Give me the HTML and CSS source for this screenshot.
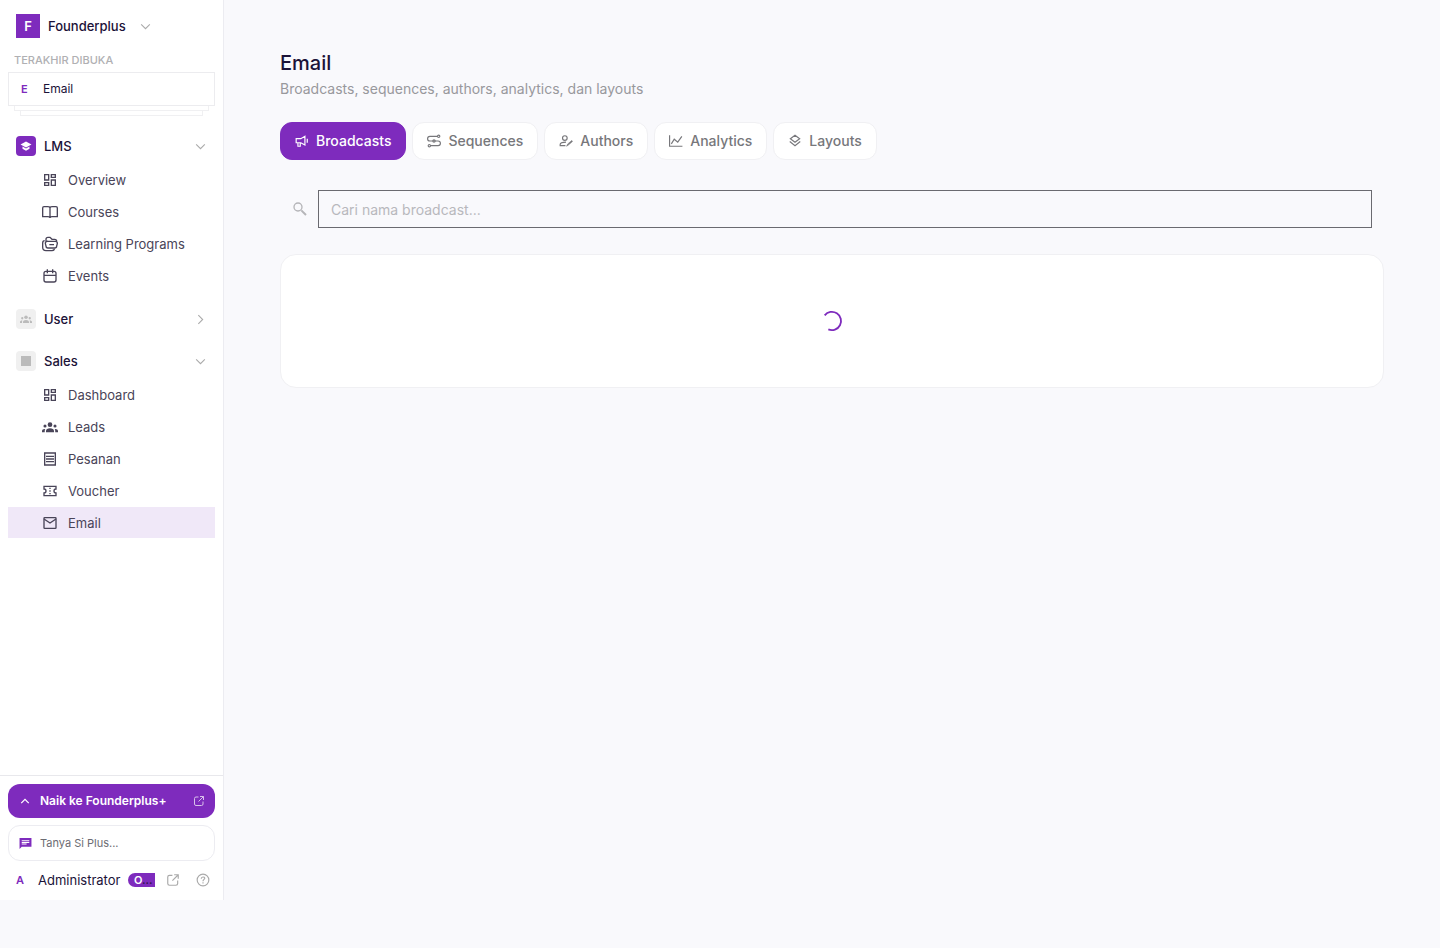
FILE: index.html
```html
<!DOCTYPE html>
<html lang="id">
<head>
<meta charset="utf-8">
<meta name="viewport" content="width=device-width, initial-scale=1">
<title>Email - Founderplus</title>
<link rel="stylesheet" href="styles.css">
</head>
<body>
<svg class="sprite" aria-hidden="true">
	<symbol id="down" viewBox="0 0 24 24"><path d="M4 8l8 8 8-8" fill="none" stroke="currentColor" stroke-width="2"/></symbol>
	<symbol id="grid" viewBox="0 0 24 24"><path d="M4 4h6v8H4zM14 4h6v4h-6zM4 16h6v4H4zM14 12h6v8h-6z" fill="none" stroke="currentColor" stroke-width="2"/></symbol>
	<symbol id="people" viewBox="0 0 24 24"><circle cx="12" cy="8.500" r="3.500"/><circle cx="4.500" cy="10.500" r="2.300"/><circle cx="19.500" cy="10.500" r="2.300"/><path d="M6 20v-2c0-2.500 2.500-4 6-4s6 1.500 6 4v2zM0 20v-2c0-2.300 2-3.300 5-3-.7.8-.9 1.500-.9 5zM24 20v-2c0-2.300-2-3.300-5-3 .7.8.9 1.500.9 5z"/></symbol>
	<symbol id="external" viewBox="0 0 24 24"><path d="M11 4H6a3 3 0 0 0-3 3v11a3 3 0 0 0 3 3h11a3 3 0 0 0 3-3v-5M14 3h7v7M21 3l-10 10" fill="none" stroke="currentColor" stroke-width="2"/></symbol>
</svg>
<div class="app">
	<aside class="sidebar">
		<button class="brand" type="button">
			<span class="logo">F</span>
			<span>Founderplus</span>
			<svg class="chevron"><use href="#down"/></svg>
		</button>
		<h2 class="recent-title">TERAKHIR DIBUKA</h2>
		<div class="recent">
			<a class="recent-card" href="#email"><span class="letter">E</span>Email</a>
			<div class="stack"></div>
			<div class="stack stack-last"></div>
		</div>
		<nav class="nav">
			<section>
				<button class="group" type="button">
					<span class="group-icon active"><svg viewBox="0 0 24 24"><path d="M12 3L1 9l11 6 11-6zM5 13v4.500l7 4 7-4V13l-7 4z"/></svg></span>
					LMS
					<svg class="chevron"><use href="#down"/></svg>
				</button>
				<ul class="list">
					<li><a class="item" href="#overview"><svg><use href="#grid"/></svg>Overview</a></li>
					<li><a class="item" href="#courses"><svg viewBox="0 0 24 24"><path d="M12 6v14M12 6c0-1-1-2-3-2H3a2 2 0 0 0-2 2v13h8c2 0 3 1 3 2 0-1 1-2 3-2h8V6a2 2 0 0 0-2-2h-6c-2 0-3 1-3 2z" fill="none" stroke="currentColor" stroke-width="2"/></svg>Courses</a></li>
					<li><a class="item" href="#programs"><svg viewBox="0 0 24 24"><path d="M6 8V5a3 3 0 0 1 3-3h3l3 3h4a3 3 0 0 1 3 3M9 8h11a3 3 0 0 1 3 3l-1 4a3 3 0 0 1-3 3H9a3 3 0 0 1-3-3L5 11a3 3 0 0 1 4-3zM11 13h7M4 7c-2 0-3 1-3 4v6c0 3 2 5 5 5h9c2 0 3-1 4-2" fill="none" stroke="currentColor" stroke-width="2"/></svg>Learning Programs</a></li>
					<li><a class="item" href="#events"><svg viewBox="0 0 24 24"><rect x="3" y="5" width="18" height="16" rx="3" fill="none" stroke="currentColor" stroke-width="2"/><path d="M3 11h18M8 2v6M16 2v6" fill="none" stroke="currentColor" stroke-width="2"/></svg>Events</a></li>
				</ul>
			</section>
			<section>
				<button class="group" type="button">
					<span class="group-icon"><svg><use href="#people"/></svg></span>
					User
					<svg class="chevron closed"><use href="#down"/></svg>
				</button>
			</section>
			<section>
				<button class="group" type="button">
					<span class="group-icon"><svg viewBox="0 0 24 24"><path d="M2 2h20v20H2z"/></svg></span>
					Sales
					<svg class="chevron"><use href="#down"/></svg>
				</button>
				<ul class="list">
					<li><a class="item" href="#dashboard"><svg><use href="#grid"/></svg>Dashboard</a></li>
					<li><a class="item" href="#leads"><svg><use href="#people"/></svg>Leads</a></li>
					<li><a class="item" href="#pesanan"><svg viewBox="0 0 24 24"><path d="M4 3h16v18H4zM6 8h12M6 12h12M6 16h12" fill="none" stroke="currentColor" stroke-width="2"/></svg>Pesanan</a></li>
					<li><a class="item" href="#voucher"><svg viewBox="0 0 24 24"><path d="M3 5h18v4a3 3 0 0 0 0 6v4H3v-4a3 3 0 0 0 0-6z" fill="none" stroke="currentColor" stroke-width="2"/><path d="M12 7v2M12 11v2M12 15v2" stroke="currentColor" stroke-width="2"/></svg>Voucher</a></li>
					<li><a class="item current" href="#email"><svg viewBox="0 0 24 24"><rect x="3" y="4" width="18" height="16" rx="1" fill="none" stroke="currentColor" stroke-width="2"/><path d="M3 6l9 6 9-6" fill="none" stroke="currentColor" stroke-width="2"/></svg>Email</a></li>
				</ul>
			</section>
		</nav>
		<div class="footer">
			<a class="upgrade" href="#upgrade">
				<svg viewBox="0 0 24 24"><path d="M3 17l9-9 9 9" fill="none" stroke="currentColor" stroke-width="3"/></svg>
				Naik ke Founderplus+
				<svg class="ext"><use href="#external"/></svg>
			</a>
			<button class="ask" type="button">
				<svg viewBox="0 0 24 24"><path d="M1 2h22v16H5l-4 4z"/><path d="M5 7h14M5 10h14M5 13h9" stroke="#fff" stroke-width="2"/></svg>
				Tanya Si Plus...
			</button>
			<div class="account">
				<span class="letter">A</span>
				<span class="name">Administrator</span>
				<span class="role">O<i>...</i></span>
				<a href="#site" aria-label="Buka situs"><svg><use href="#external"/></svg></a>
				<a href="#help" aria-label="Bantuan"><svg viewBox="0 0 24 24"><g fill="none" stroke="currentColor" stroke-width="2"><circle cx="12" cy="12" r="10"/><path d="M9 10c0-4 6-4 6-1 0 2-3 2-3 5M12 16v2"/></g></svg></a>
			</div>
		</div>
	</aside>
	<main class="main">
		<h1>Email</h1>
		<p class="subtitle">Broadcasts, sequences, authors, analytics, dan layouts</p>
		<div class="tabs">
			<button class="tab selected" type="button"><svg viewBox="0 0 24 24"><path d="M2 8h8l7-4v15l-7-4H2zM5 15v6h4v-6M21 8v7" fill="none" stroke="currentColor" stroke-width="2"/></svg>Broadcasts</button>
			<button class="tab" type="button"><svg viewBox="0 0 24 24"><g fill="none" stroke="currentColor" stroke-width="2"><path d="M18 4H5a4 4 0 0 0 0 8h14a4 4 0 0 1 0 8H6"/><circle cx="20" cy="4" r="2"/><circle cx="4" cy="20" r="2"/><circle cx="12" cy="12" r="2"/></g></svg>Sequences</button>
			<button class="tab" type="button"><svg viewBox="0 0 24 24"><g fill="none" stroke="currentColor" stroke-width="2"><circle cx="10" cy="7" r="4"/><path d="M11 20H2v-2c0-3 4-4 10-4"/><path d="M13 21l2-4 7-6 1 2-7 6z" fill="currentColor" stroke-width="1"/></g></svg>Authors</button>
			<button class="tab" type="button"><svg viewBox="0 0 24 24"><path d="M1 2v19h22M4 17l5-8 6 5 7-10" fill="none" stroke="currentColor" stroke-width="2"/></svg>Analytics</button>
			<button class="tab" type="button"><svg viewBox="0 0 24 24"><path d="M12 2l8 6-8 6-8-6zM3 13l9 7 9-7" fill="none" stroke="currentColor" stroke-width="2"/></svg>Layouts</button>
		</div>
		<div class="search">
			<label for="search" aria-label="Cari"><svg viewBox="0 0 24 24"><circle cx="9" cy="9" r="6" fill="none" stroke="currentColor" stroke-width="2"/><path d="M14 14l7 7" stroke="currentColor" stroke-width="3"/></svg></label>
			<input id="search" type="text" placeholder="Cari nama broadcast...">
		</div>
		<div class="panel">
			<svg class="spinner" viewBox="0 0 24 24"><path d="M4 5.800A10 10 0 1 1 8 21.200" fill="none" stroke="currentColor" stroke-width="2"/></svg>
		</div>
	</main>
</div>
</body>
</html>
```
FILE: styles.css
```css
* {
	box-sizing: border-box;
}
body {
	margin: 0;
	background: #f9f9fc;
	color: #1b1238;
	font: 13px/20px Inter, "Open Sans", sans-serif;
}
a {
	color: inherit;
	text-decoration: none;
}
button {
	border: 0;
	background: none;
	color: inherit;
	font: inherit;
	text-align: left;
	cursor: pointer;
}
svg {
	flex: none;
	width: 16px;
	height: 16px;
	fill: currentColor;
}
.sprite {
	display: none;
}
.app {
	display: flex;
	min-height: 100vh;
}

/* sidebar */
.sidebar {
	display: flex;
	flex: none;
	flex-direction: column;
	width: 224px;
	min-height: calc(100vh - 48px);
	align-self: flex-start;
	border-right: 1px solid #ececf1;
	background: #fff;
}
.brand {
	display: flex;
	align-items: center;
	gap: 8px;
	padding: 14px 16px 0;
	font-weight: 500;
}
.brand .chevron {
	margin-left: 5px;
}
.logo {
	width: 24px;
	background: #7e2bbd;
	color: #fff;
	font-weight: 600;
	line-height: 24px;
	text-align: center;
}
.chevron {
	width: 13px;
	height: 13px;
	color: #aaa;
}
.recent-title {
	margin: 14px 14px 4px;
	color: #b0b0b3;
	font-size: 11px;
	font-weight: 500;
	line-height: 16px;
}
.recent {
	padding: 0 8px;
}
.recent-card {
	display: flex;
	align-items: center;
	height: 34px;
	padding-left: 12px;
	border: 1px solid #ececef;
	font-size: 12px;
}
.letter {
	width: 22px;
	color: #7e2bbd;
	font-size: 11px;
	font-weight: 600;
}
.stack {
	height: 5px;
	margin: 0 6px;
	border: 1px solid #f0f0f2;
	border-top: 0;
}
.stack-last {
	margin: 0 12px;
}
.nav {
	display: flex;
	flex: 1;
	flex-direction: column;
	gap: 10px;
	padding: 14px 8px;
}
.group {
	display: flex;
	align-items: center;
	gap: 8px;
	width: 100%;
	height: 32px;
	padding: 0 8px;
	font-weight: 500;
}
.group .chevron {
	margin-left: auto;
}
.closed {
	transform: rotate(-90deg);
}
.group-icon {
	display: flex;
	align-items: center;
	justify-content: center;
	width: 20px;
	height: 20px;
	border-radius: 4px;
	background: #f0f0f0;
	color: #bbb;
}
.group-icon svg {
	width: 12px;
	height: 12px;
}
.group-icon.active {
	background: #7e2bbd;
	color: #fff;
}
.list {
	display: flex;
	flex-direction: column;
	gap: 1px;
	margin: 0;
	padding: 2px 0;
	list-style: none;
}
.item {
	display: flex;
	align-items: center;
	gap: 10px;
	height: 31px;
	padding-left: 34px;
	color: #494458;
}
.item.current {
	background: #f0e8f8;
}
.footer {
	padding: 8px 8px 9px;
	border-top: 1px solid #e8e8ec;
}
.upgrade,
.ask {
	display: flex;
	align-items: center;
	gap: 8px;
	width: 100%;
	padding: 0 10px;
	border-radius: 12px;
	font-size: 12px;
}
.upgrade {
	height: 34px;
	background: #7e2bbd;
	color: #fff;
	font-weight: 600;
}
.upgrade svg {
	width: 14px;
	height: 10px;
}
.upgrade .ext {
	width: 12px;
	height: 12px;
	margin-left: auto;
	opacity: .7;
}
.ask {
	height: 36px;
	margin: 7px 0 8px;
	border: 1px solid #ececf1;
	color: #6c6c72;
	font-size: 11px;
}
.ask svg {
	width: 13px;
	height: 13px;
	color: #7e2bbd;
}
.account {
	display: flex;
	align-items: center;
	height: 22px;
	padding: 0 5px 0 8px;
}
.name {
	flex: 1;
}
.role {
	width: 27px;
	height: 14px;
	margin-right: 11px;
	padding-left: 6px;
	border-radius: 7px 0 0 7px;
	background: #7e2bbd;
	color: #fff;
	font-size: 11px;
	font-weight: 600;
	line-height: 14px;
}
.role i {
	color: #35154f;
	font-style: normal;
}
.account a {
	display: flex;
	color: #aaa;
}
.account a + a {
	margin-left: 16px;
}
.account svg {
	width: 14px;
	height: 14px;
}
.account .letter {
	flex: none;
}

/* content */
.main {
	flex: 1;
	min-width: 0;
	padding: 48px 56px;
	font-size: 14px;
}
h1 {
	margin: 0;
	font-size: 20px;
	font-weight: 500;
	line-height: 30px;
}
.subtitle {
	margin: 1px 0 23px;
	color: #98989c;
}
.tabs {
	display: flex;
	flex-wrap: wrap;
	gap: 6px;
}
.tab {
	display: flex;
	align-items: center;
	gap: 7px;
	height: 38px;
	padding: 0 14px;
	border: 1px solid #f0f0f3;
	border-radius: 12px;
	background: #fff;
	color: #77777b;
	font-weight: 500;
}
.tab svg {
	width: 14px;
	height: 14px;
}
.tab.selected {
	border-color: #7e2bbd;
	background: #7e2bbd;
	color: #fff;
}
.search {
	display: flex;
	align-items: center;
	gap: 10px;
	margin: 30px 0 26px;
	padding: 0 12px;
}
.search label {
	display: flex;
	color: #b5b5b8;
}
.search input {
	flex: 1;
	min-width: 0;
	height: 38px;
	padding: 0 12px;
	border: 1px solid #6a6a70;
	background: transparent;
	color: inherit;
	font: inherit;
}
.search input::placeholder {
	color: #b8b8bc;
}
.panel {
	display: flex;
	align-items: center;
	justify-content: center;
	padding: 55px 0;
	border: 1px solid #f0f0f3;
	border-radius: 16px;
	background: #fff;
}
.spinner {
	width: 22px;
	height: 22px;
	color: #7e2bbd;
}
```
